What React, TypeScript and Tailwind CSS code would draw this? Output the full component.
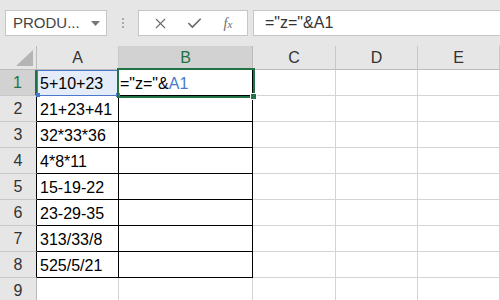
import { Check, X } from 'lucide-react'

const cols = [
  { name: 'A', w: 'w-[82px]' },
  { name: 'B', w: 'w-[134px]' },
  { name: 'C', w: 'w-[83px]' },
  { name: 'D', w: 'w-[82px]' },
  { name: 'E', w: 'w-[82px]' },
]

const values = ['5+10+23', '21+23+41', '32*33*36', '4*8*11', '15-19-22', '23-29-35', '313/33/8', '525/5/21', '']

function Corner() {
  return (
    <div className="w-[37px] h-[24px] shrink-0 bg-[#e6e6e6] border-r border-b border-[#bcbcbc] flex items-end justify-end pr-[3px] pb-[3px]">
      <svg width="17" height="16" viewBox="0 0 17 16">
        <polygon points="17,0 17,16 0,16" fill="#b4b4b4" />
      </svg>
    </div>
  )
}

function ColHeader({ name, w }: { name: string; w: string }) {
  const active = name === 'B'
  return (
    <div
      className={`${w} h-[24px] shrink-0 flex items-center justify-center pt-[1px] text-[16px] border-r ${
        active
          ? 'bg-[#d2d2d2] text-[#217346] border-[#bcbcbc] border-b-2 border-b-[#217346]'
          : 'bg-[#e6e6e6] text-[#333] border-[#c8c8c8] border-b border-b-[#bcbcbc]'
      }`}
    >
      {name}
    </div>
  )
}

function Row({ n, value }: { n: number; value: string }) {
  const boxed = n <= 8
  const first = n === 1
  return (
    <div className="flex h-[26px]">
      <div
        className={`w-[37px] h-[26px] shrink-0 flex items-center justify-center pt-[1px] text-[16px] border-b border-b-[#c8c8c8] ${
          first
            ? 'bg-[#d2d2d2] text-[#217346] border-r-2 border-r-[#217346]'
            : boxed
              ? 'bg-[#e6e6e6] text-[#333] border-r border-r-black'
              : 'bg-[#e6e6e6] text-[#333] border-r border-r-[#bcbcbc]'
        }`}
      >
        {n}
      </div>
      <div
        className={`w-[82px] h-[26px] shrink-0 flex items-center pt-[2px] pl-[3px] text-[16px] text-black border-r border-b whitespace-nowrap ${
          boxed ? 'border-black' : 'border-[#d4d4d4]'
        } ${first ? 'bg-[#e3ecf8]' : 'bg-white'}`}
      >
        {value}
      </div>
      <div
        className={`w-[134px] h-[26px] shrink-0 flex items-center pt-[2px] pl-[1px] text-[16px] text-black border-r border-b ${
          boxed ? 'border-black' : 'border-[#d4d4d4]'
        }`}
      >
        {first && (
          <span>
            ="z="&amp;<span className="text-[#4a78cc]">A1</span>
          </span>
        )}
      </div>
      <div className="w-[83px] h-[26px] shrink-0 border-r border-b border-[#d4d4d4]" />
      <div className="w-[82px] h-[26px] shrink-0 border-r border-b border-[#d4d4d4]" />
      <div className="w-[82px] h-[26px] shrink-0 border-r border-b border-[#d4d4d4]" />
    </div>
  )
}

export default function App() {
  return (
    <div className="w-[500px] h-[300px] overflow-hidden bg-white font-['Liberation_Sans',Arial,sans-serif]">
      <div className="h-[46px] bg-[#e6e6e6] flex items-start pt-[10px] pl-[5px]">
        <div className="w-[102px] h-[26px] shrink-0 bg-white border border-[#c6c6c6] flex items-center pl-[7px] pr-[6px] text-[15px] text-[#444]">
          <span className="flex-1">PRODU...</span>
          <svg width="9" height="5" viewBox="0 0 9 5">
            <polygon points="0,0 9,0 4.5,5" fill="#777" />
          </svg>
        </div>
        <div className="w-[31px] h-[26px] shrink-0 flex flex-col items-center justify-center gap-[2px]">
          <span className="w-[2px] h-[2px] bg-[#aaa]" />
          <span className="w-[2px] h-[2px] bg-[#aaa]" />
          <span className="w-[2px] h-[2px] bg-[#aaa]" />
        </div>
        <div className="w-[110px] h-[26px] shrink-0 bg-white border border-[#c6c6c6] flex items-center text-[#6b6b6b]">
          <div className="w-[38px] flex justify-center pl-[4px]">
            <X size={17} strokeWidth={1.6} />
          </div>
          <div className="w-[34px] flex justify-center">
            <Check size={17} strokeWidth={2.4} />
          </div>
          <div className="w-[34px] flex justify-center text-[14px] italic font-['Liberation_Serif',serif]">
            <span>
              f<span className="text-[11px]">x</span>
            </span>
          </div>
        </div>
        <div className="ml-[5px] w-[260px] h-[26px] shrink-0 bg-white border border-[#c6c6c6] flex items-center pl-[11px] text-[16px] text-[#333]">
          ="z="&amp;A1
        </div>
      </div>
      <div className="relative">
        <div className="flex">
          <Corner />
          {cols.map((c) => (
            <ColHeader key={c.name} name={c.name} w={c.w} />
          ))}
        </div>
        {values.map((v, i) => (
          <Row key={i} n={i + 1} value={v} />
        ))}
        {/* reference highlight on A1 */}
        <div className="absolute left-[37px] top-[24px] w-[82px] h-[26px] border border-[#4a78cc]" />
        <div className="absolute left-[36px] top-[47px] w-[4px] h-[4px] bg-[#4a78cc]" />
        <div className="absolute left-[116px] top-[47px] w-[4px] h-[4px] bg-[#4a78cc]" />
        {/* active cell B1 */}
        <div className="absolute left-[117px] top-[22px] w-[138px] h-[30px] border-2 border-[#217346]" />
        <div className="absolute left-[250px] top-[47px] w-[7px] h-[7px] bg-[#217346] border border-white" />
      </div>
    </div>
  )
}
